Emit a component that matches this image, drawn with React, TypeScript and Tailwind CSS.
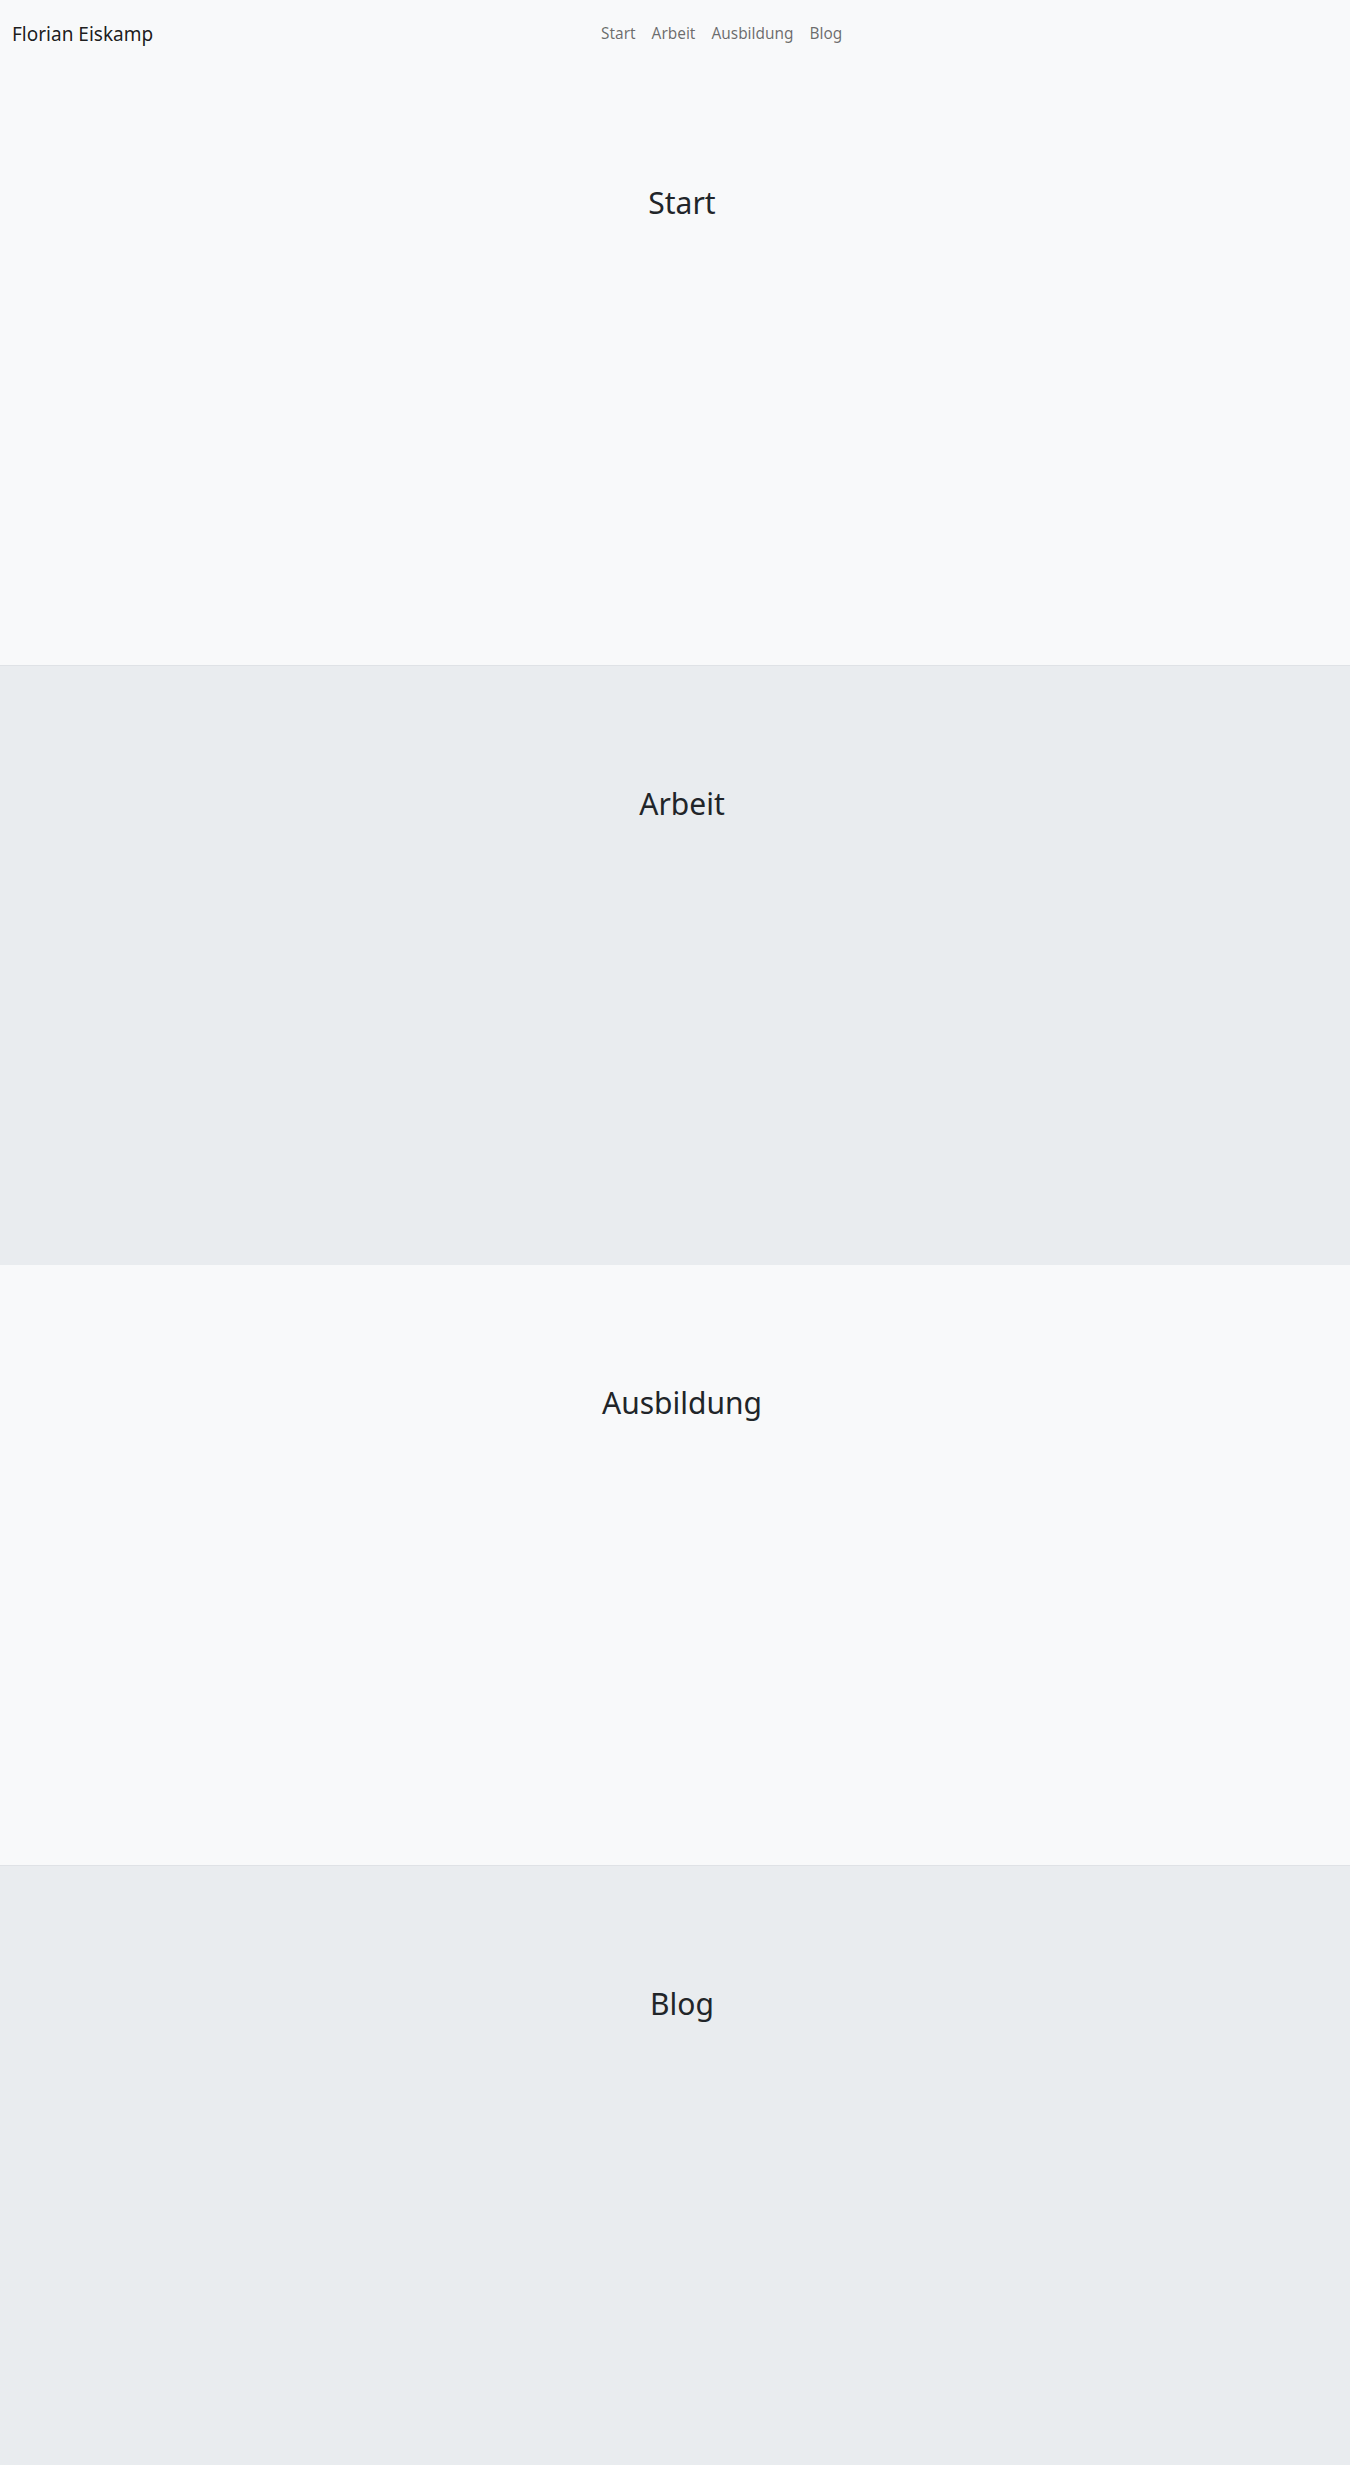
import React from "react";

const font = { fontFamily: '"Noto Sans", "Open Sans", sans-serif' };

function Section({ title, dark }: { title: string; dark?: boolean }) {
  return (
    <section
      className={
        dark
          ? "h-[600px] bg-[#e9ecef] border-t border-[#dfe2e6]"
          : "h-[600px] bg-[#f8f9fa]"
      }
    >
      <div className="pt-[120px] pl-[14px] text-center">
        <h2 className="text-[30px] leading-[1.2] font-normal text-[#212529]">{title}</h2>
      </div>
    </section>
  );
}

export default function App() {
  return (
    <div style={font} className="w-full bg-[#f8f9fa]">
      <nav className="h-[65px] bg-[#f8f9fa] flex items-center px-[12px] pt-[2px]">
        <a className="text-[19px] leading-[30px] text-[rgba(0,0,0,0.9)] w-[581px]" href="#">
          Florian Eiskamp
        </a>
        <ul className="flex items-center text-[15.4px] leading-[24px] text-[rgba(0,0,0,0.58)]">
          <li className="px-[8px]">Start</li>
          <li className="px-[8px]">Arbeit</li>
          <li className="px-[8px]">Ausbildung</li>
          <li className="px-[8px]">Blog</li>
        </ul>
      </nav>
      <Section title="Start" />
      <Section title="Arbeit" dark />
      <Section title="Ausbildung" />
      <Section title="Blog" dark />
    </div>
  );
}
